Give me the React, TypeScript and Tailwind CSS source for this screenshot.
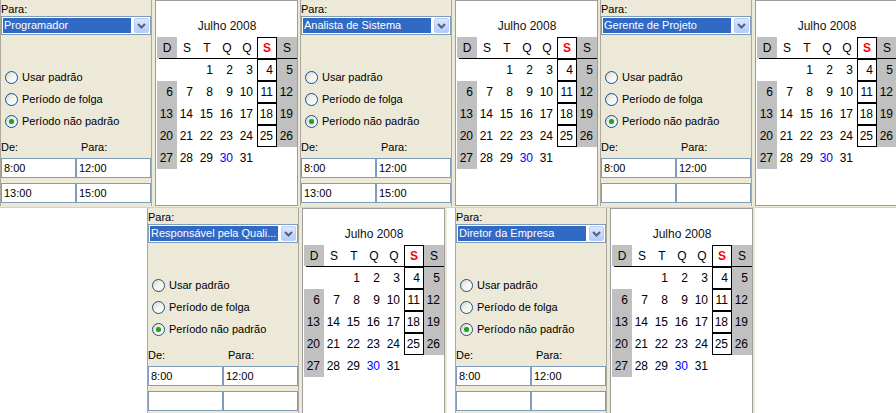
import React from "react";

type PanelProps = { role: string; times: [string, string][] };

const weeks: (number | null)[][] = [
  [null, null, 1, 2, 3, 4, 5],
  [6, 7, 8, 9, 10, 11, 12],
  [13, 14, 15, 16, 17, 18, 19],
  [20, 21, 22, 23, 24, 25, 26],
  [27, 28, 29, 30, 31, null, null],
];
const heads = ["D", "S", "T", "Q", "Q", "S", "S"];

function Radio({ checked, label }: { checked?: boolean; label: string }) {
  return (
    <div className="flex h-[22px] items-center pl-[4px]">
      <div className="flex h-[13px] w-[13px] items-center justify-center rounded-full border border-[#1c5180] bg-gradient-to-br from-[#d6d5cc] via-[#f4f4f0] to-white">
        {checked ? (
          <div className="h-[5px] w-[5px] rounded-full bg-[#21a121] shadow-[0_0_1px_#7fd77f]" />
        ) : null}
      </div>
      <span className="ml-[4px] text-[11px] leading-[13px] text-black">{label}</span>
    </div>
  );
}

function Calendar() {
  return (
    <div className="h-[206px] w-[143px] border border-[#9d9d9d] bg-white pl-[1px] font-['Liberation_Sans',Arial,sans-serif] text-[12px] text-black">
      <div className="mt-[18px] h-[14px] w-[140px] text-center leading-[14px] text-[#111]">
        Julho 2008
      </div>
      <div className="mt-[4px] flex w-[140px]">
        {heads.map((h, i) =>
          i === 5 ? (
            <div
              key={i}
              className="flex h-[21px] w-[20px] items-center justify-center border-x border-t border-black font-bold text-[#ff0000]"
            >
              {h}
            </div>
          ) : i === 0 || i === 6 ? (
            <div key={i} className="flex h-[21px] w-[20px] items-center justify-center bg-[#c0c0c0]">
              {h}
            </div>
          ) : (
            <div key={i} className="flex h-[21px] w-[20px] items-center justify-center">
              {h}
            </div>
          )
        )}
      </div>
      <div className="ml-[2px] h-[1px] w-[138px] bg-black" />
      {weeks.map((w, r) => (
        <div key={r} className="flex w-[140px]">
          {w.map((d, i) => {
            if (d === null) return <div key={i} className="h-[22px] w-[20px]" />;
            if (i === 5)
              return (
                <div
                  key={i}
                  className="flex h-[22px] w-[20px] items-center justify-end border border-black pr-[3px] leading-[14px]"
                >
                  {d}
                </div>
              );
            if (i === 0 || i === 6)
              return (
                <div key={i} className="flex h-[22px] w-[20px] items-center justify-end bg-[#c0c0c0] pr-[4px] leading-[14px]">
                  {d}
                </div>
              );
            if (d === 30)
              return (
                <div key={i} className="flex h-[22px] w-[20px] items-center justify-end pr-[4px] leading-[14px] text-[#0000ff]">
                  {d}
                </div>
              );
            return (
              <div key={i} className="flex h-[22px] w-[20px] items-center justify-end pr-[4px] leading-[14px]">
                {d}
              </div>
            );
          })}
        </div>
      ))}
    </div>
  );
}

function Panel({ role, times }: PanelProps) {
  return (
    <div className="flex h-[208px] w-[300px] shrink-0 border-b border-[#d4d0c8] bg-[#ece9d8] font-['Liberation_Sans',Arial,sans-serif] text-[11px] text-black">
      <div className="h-[206px] w-[152px] shrink-0 border-x border-[#aca899]">
        <div className="pt-[3px] leading-[13px]">Para:</div>
        <div className="flex h-[19px] w-full items-center border border-[#7f9db9] bg-white pl-[1px] pr-[1px]">
          <div className="flex h-[15px] min-w-0 flex-1 items-center overflow-hidden whitespace-nowrap bg-[#316ac5] pl-[1px] leading-[13px] text-white">
            {role}
          </div>
          <div className="ml-[3px] flex h-[15px] w-[15px] shrink-0 items-center justify-center rounded-[2px] border border-[#b9cdf6] bg-gradient-to-b from-[#dde7fd] to-[#b7cbf9]">
            <svg width="9" height="6" viewBox="0 0 9 6">
              <path d="M1 1 L4.5 4.5 L8 1" fill="none" stroke="#4d6185" strokeWidth="2" />
            </svg>
          </div>
        </div>
        <div className="mt-[31px]">
          <Radio label="Usar padrão" />
          <Radio label="Período de folga" />
          <Radio checked label="Período não padrão" />
        </div>
        <div className="mt-[9px] grid grid-cols-2 leading-[13px]">
          <div>De:</div>
          <div className="pl-[5px]">Para:</div>
        </div>
        <div className="mt-[4px] flex flex-col gap-[5px]">
          {times.map((t, i) => (
            <div key={i} className="grid grid-cols-2">
              <div className="flex h-[20px] items-center border border-[#7f9db9] bg-white pl-[2px] leading-[13px]">
                {t[0]}
              </div>
              <div className="flex h-[20px] items-center border border-[#7f9db9] bg-white pl-[2px] leading-[13px]">
                {t[1]}
              </div>
            </div>
          ))}
        </div>
      </div>
      <div className="w-[3px] shrink-0" />
      <Calendar />
    </div>
  );
}

export default function App() {
  const full: [string, string][] = [
    ["8:00", "12:00"],
    ["13:00", "15:00"],
  ];
  const half: [string, string][] = [
    ["8:00", "12:00"],
    ["", ""],
  ];
  return (
    <div className="h-[413px] w-[896px] overflow-hidden bg-white">
      <div className="flex">
        <Panel role="Programador" times={full} />
        <Panel role="Analista de Sistema" times={full} />
        <Panel role="Gerente de Projeto" times={half} />
      </div>
      <div className="flex pl-[147px]">
        <Panel role="Responsável pela Quali..." times={half} />
        <div className="w-[8px] shrink-0" />
        <Panel role="Diretor da Empresa" times={half} />
      </div>
    </div>
  );
}
